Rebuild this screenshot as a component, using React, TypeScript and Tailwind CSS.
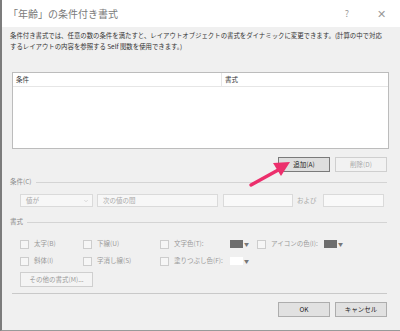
import { ChevronDown } from "lucide-react";

const font = { fontFamily: '"Noto Sans CJK JP", "Noto Sans", sans-serif' };

function Btn({ label, disabled = false, hot = false }: { label: string; disabled?: boolean; hot?: boolean }) {
  return (
    <div
      className={`flex h-[15px] w-[52px] items-center justify-center border text-[6.5px] ${
        hot
          ? "border-[#7a7a7a] bg-[#dedede] text-[#222]"
          : disabled
          ? "border-[#cfcfcf] bg-[#f2f2f2] text-[#a8a8a8]"
          : "border-[#adadad] bg-[#e1e1e1] text-[#222]"
      }`}
    >
      {label}
    </div>
  );
}

function Check({ label, w }: { label: string; w: string }) {
  return (
    <div className={`flex items-center gap-[5px] ${w}`}>
      <div className="h-[9px] w-[9px] border border-[#cdcdcd] bg-[#f6f6f6]" />
      <span className="text-[6.5px] text-[#9a9a9a]">{label}</span>
    </div>
  );
}

function Swatch({ color }: { color: string }) {
  return (
    <div className="flex items-center gap-[1px]">
      <div className={`h-[8px] w-[13px] ${color}`} />
      <span className="text-[5px] text-[#777]">▼</span>
    </div>
  );
}

function GroupLabel({ label }: { label: string }) {
  return (
    <div className="flex h-[10px] items-center gap-[4px] pr-[13px]">
      <span className="text-[6.5px] text-[#8a8a8a]">{label}</span>
      <div className="h-px flex-1 bg-[#d4d4d4]" />
    </div>
  );
}

export default function App() {
  return (
    <div
      style={font}
      className="relative flex h-[331px] w-[400px] flex-col overflow-hidden border-b border-l-2 border-b-[#9a9a9a] border-l-[#7c7c7c] bg-[#f0f0f0]"
    >
      {/* title bar */}
      <div className="flex h-[27px] items-center justify-between bg-white pl-[6px] pr-[14px]">
        <span className="text-[10px] text-[#7a7a7a]">「年齢」の条件付き書式</span>
        <div className="flex items-center gap-[28px] text-[#9a9a9a]">
          <span className="text-[9px]">?</span>
          <span className="text-[11px]">✕</span>
        </div>
      </div>

      <div className="flex flex-col pl-[8px]">
        <p className="mt-[3px] whitespace-nowrap text-[6.4px] leading-[11px] text-[#333]">
          条件付き書式では、任意の数の条件を満たすと、レイアウトオブジェクトの書式をダイナミックに変更できます。(計算の中で対応
          <br />
          するレイアウトの内容を参照する Self 関数を使用できます。)
        </p>

        {/* table */}
        <div className="ml-[2px] mt-[20px] mr-[11px] h-[77px] border border-[#bcbcbc] bg-white">
          <div className="flex h-[14px] items-center border-b border-[#e6e6e6] text-[6.5px] text-[#333]">
            <div className="flex h-full w-[209px] items-center border-r border-[#e6e6e6] pl-[3px]">条件</div>
            <div className="pl-[3px]">書式</div>
          </div>
        </div>

        {/* add/delete */}
        <div className="mt-[8px] flex justify-end gap-[5px] pr-[13px]">
          <Btn label="追加(A)" hot />
          <Btn label="削除(D)" disabled />
        </div>

        <div className="mt-[5px]">
          <GroupLabel label="条件(C)" />
        </div>

        {/* condition inputs */}
        <div className="ml-[10px] mt-[7px] flex h-[13px] items-center text-[6.5px] text-[#a8a8a8]">
          <div className="flex h-full w-[73px] items-center justify-between border border-[#dadada] bg-[#f7f7f7] pl-[5px] pr-[3px]">
            <span>値が</span>
            <ChevronDown size={6} strokeWidth={2} className="text-[#bbb]" />
          </div>
          <div className="ml-[4px] flex h-full w-[121px] items-center border border-[#dadada] bg-[#f7f7f7] pl-[5px]">
            <span>次の値の間</span>
          </div>
          <div className="ml-[5px] h-full w-[70px] border border-[#dadada] bg-[#f9f9f9]" />
          <span className="ml-[4px] w-[26px]">および</span>
          <div className="h-full w-[61px] border border-[#dadada] bg-[#f9f9f9]" />
        </div>

        <div className="mt-[10px]">
          <GroupLabel label="書式" />
        </div>

        {/* style checkboxes */}
        <div className="ml-[10px] mt-[12px] flex h-[10px] items-center">
          <Check label="太字(B)" w="w-[63px]" />
          <Check label="下線(U)" w="w-[77px]" />
          <div className="flex w-[97px] items-center">
            <Check label="文字色(T):" w="w-[70px]" />
            <Swatch color="bg-[#6e6e6e]" />
          </div>
          <div className="flex items-center">
            <Check label="アイコンの色(I):" w="w-[67px]" />
            <Swatch color="bg-[#6e6e6e]" />
          </div>
        </div>
        <div className="ml-[10px] mt-[7px] flex h-[10px] items-center">
          <Check label="斜体(I)" w="w-[63px]" />
          <Check label="字消し線(S)" w="w-[77px]" />
          <div className="flex w-[97px] items-center">
            <Check label="塗りつぶし色(F):" w="w-[70px]" />
            <Swatch color="bg-white" />
          </div>
        </div>

        <div className="ml-[10px] mt-[6px] flex h-[15px] w-[73px] items-center justify-center border border-[#cfcfcf] bg-[#f4f4f4] text-[6.5px] text-[#9a9a9a]">
          その他の書式(M)...
        </div>

        <div className="ml-[2px] mr-[13px] mt-[6px] h-px bg-[#c9c9c9]" />

        <div className="mt-[8px] flex justify-end gap-[5px] pr-[13px]">
          <Btn label="OK" />
          <Btn label="キャンセル" />
        </div>
      </div>

      {/* pink annotation arrow */}
      <svg className="pointer-events-none absolute left-[244px] top-[156px]" width="50" height="32" viewBox="0 0 50 32">
        <line x1="5" y1="29" x2="34" y2="13" stroke="#ec2f6c" strokeWidth="3.5" strokeLinecap="round" />
        <polygon points="44,6 27,7 35,20" fill="#ec2f6c" />
      </svg>
    </div>
  );
}
